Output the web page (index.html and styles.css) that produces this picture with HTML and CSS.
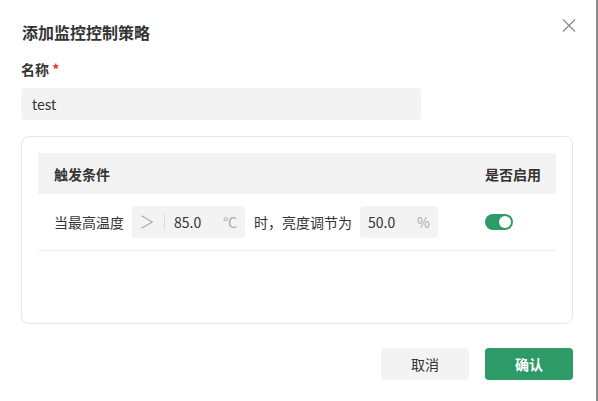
FILE: index.html
```html
<!DOCTYPE html>
<html lang="zh">
<head>
<meta charset="utf-8">
<link rel="stylesheet" href="styles.css">
</head>
<body>
<div class="modal">
  <div class="header">
    <div class="title">添加监控控制策略</div>
    <svg class="close" width="14" height="13" viewBox="0 0 14 13"><path d="M1 0.5 L13 12.5 M13 0.5 L1 12.5" stroke="#8a8a8a" stroke-width="1.2" fill="none"/></svg>
  </div>
  <div class="label">名称 <span class="req">*</span></div>
  <div class="input">test</div>
  <div class="card">
    <div class="thead">
      <div class="th first">触发条件</div>
      <div class="th">是否启用</div>
    </div>
    <div class="trow">
      <div class="td first">
        <span>当最高温度</span>
        <div class="group g1">
          <svg class="op" width="12" height="14" viewBox="0 0 12 14"><polyline points="0.6,0.8 11.2,7 0.6,13.2" stroke="#ababab" stroke-width="1.1" fill="none"/></svg>
          <span class="sep"></span>
          <span class="val">85.0</span>
          <span class="unit">°C</span>
        </div>
        <span>时，亮度调节为</span>
        <div class="group g2">
          <span class="val">50.0</span>
          <span class="unit">%</span>
        </div>
      </div>
      <div class="td">
        <div class="switch"><div class="knob"></div></div>
      </div>
    </div>
  </div>
  <div class="footer">
    <div class="btn cancel">取消</div>
    <div class="btn ok">确认</div>
  </div>
</div>
</body>
</html>
```
FILE: styles.css
```css
html, body {
  margin: 0;
  padding: 0;
  background: #fff;
}
body {
  width: 598px;
  height: 401px;
  overflow: hidden;
  font-family: "Noto Sans CJK SC", "Noto Sans", sans-serif;
  color: #333;
  font-size: 14px;
}
.modal {
  box-sizing: border-box;
  width: 598px;
  height: 401px;
  padding: 20px 24px 0 21px;
  border-right: 2px solid #8c8c8c;
}
.header {
  display: flex;
  justify-content: space-between;
  align-items: flex-start;
  height: 24px;
}
.title {
  font-size: 16px;
  font-weight: 700;
  line-height: 24px;
  padding-left: 1px;
  color: #333;
}
.close {
  margin-top: -1px;
  margin-right: -4px;
}
.label {
  margin-top: 14px;
  font-size: 14px;
  font-weight: 700;
  line-height: 22px;
}
.req {
  color: #e5312f;
}
.input {
  margin-top: 8px;
  box-sizing: border-box;
  width: 400px;
  height: 32px;
  line-height: 32px;
  background: #f3f3f3;
  border-radius: 4px;
  padding-left: 11px;
  color: #333;
}
.card {
  margin-top: 16px;
  box-sizing: border-box;
  width: 552px;
  height: 188px;
  border: 1px solid #e6e6e6;
  border-radius: 8px;
  padding: 16px 16px 0 16px;
}
.thead, .trow {
  display: grid;
  grid-template-columns: 1fr 71px;
  align-items: center;
}
.thead {
  height: 41px;
  background: #f3f3f3;
  font-weight: 700;
}
.trow {
  height: 56px;
  border-bottom: 1px solid #eeeeee;
}
.first {
  padding-left: 16px;
}
.td.first {
  display: flex;
  align-items: center;
  gap: 8px;
}
.group {
  display: flex;
  align-items: center;
  box-sizing: border-box;
  height: 32px;
  background: #f3f3f3;
  border-radius: 4px;
  margin-right: 1px;
}
.g1 {
  width: 113px;
  padding-left: 9px;
}
.g2 {
  width: 78px;
  padding-left: 8px;
}
.op {
  display: block;
  flex: none;
}
.sep {
  width: 1px;
  height: 16px;
  background: #dcdcdc;
  margin-left: 11px;
  margin-right: 9px;
}
.val {
  flex: 1;
  color: #333;
}
.unit {
  color: #a9a9a9;
  padding-right: 8px;
}
.switch {
  width: 28px;
  height: 16px;
  border-radius: 8px;
  background: #2e9a68;
  position: relative;
}
.knob {
  position: absolute;
  right: 2px;
  top: 2px;
  width: 12px;
  height: 12px;
  border-radius: 50%;
  background: #fff;
}
.footer {
  margin-top: 24px;
  display: flex;
  justify-content: flex-end;
  gap: 16px;
  width: 552px;
}
.btn {
  width: 88px;
  height: 32px;
  line-height: 32px;
  text-align: center;
  border-radius: 4px;
}
.cancel {
  background: #f3f3f3;
  color: #333;
}
.ok {
  background: #2e9a68;
  color: #fff;
  font-weight: 700;
}
```
